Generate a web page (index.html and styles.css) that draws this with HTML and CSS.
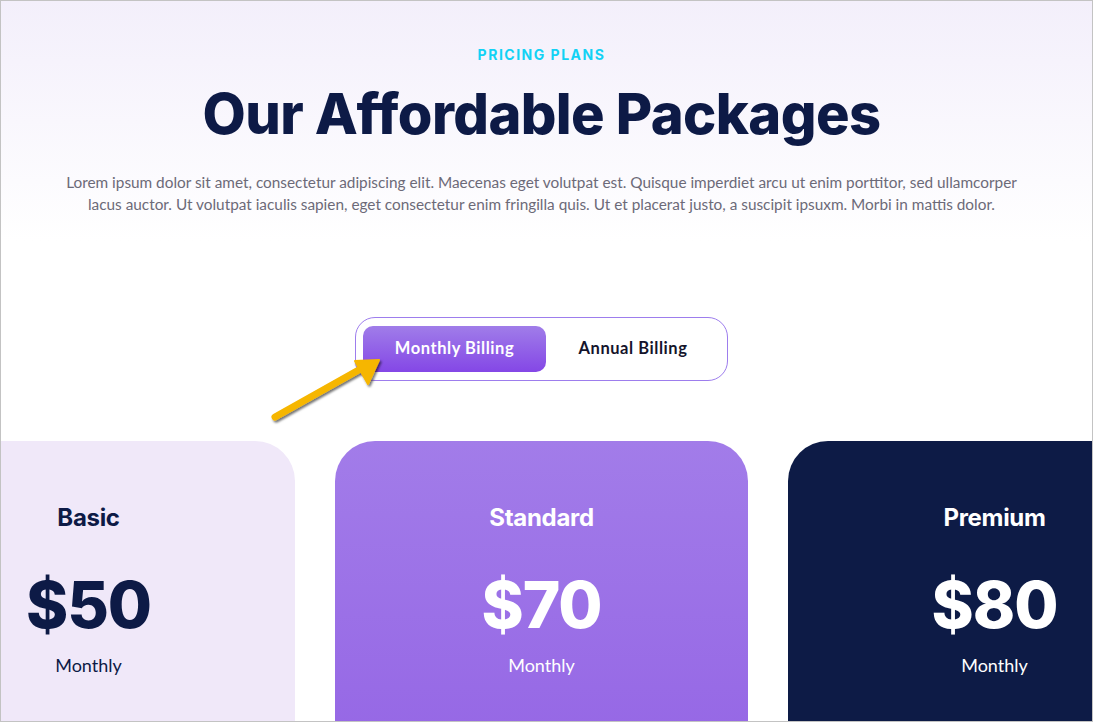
FILE: index.html
```html
<!DOCTYPE html>
<html lang="en">
<head>
<meta charset="utf-8">
<title>Pricing Plans</title>
<link rel="stylesheet" href="styles.css">
</head>
<body>
<div class="frame">
  <section class="hero">
    <p class="eyebrow">PRICING PLANS</p>
    <h1 class="title">Our Affordable Packages</h1>
    <p class="lead">Lorem ipsum dolor sit amet, consectetur adipiscing elit. Maecenas eget volutpat est. Quisque imperdiet arcu ut enim porttitor, sed ullamcorper lacus auctor. Ut volutpat iaculis sapien, eget consectetur enim fringilla quis. Ut et placerat justo, a suscipit ipsuxm. Morbi in mattis dolor.</p>
  </section>

  <div class="toggle-wrap">
    <div class="toggle">
      <button class="toggle-btn active">Monthly Billing</button>
      <button class="toggle-btn">Annual Billing</button>
    </div>
    <svg class="pointer" width="120" height="72" viewBox="0 0 120 72">
      <defs>
        <filter id="sh" x="-20%" y="-20%" width="140%" height="140%">
          <feDropShadow dx="1.5" dy="2" stdDeviation="1.2" flood-color="#000" flood-opacity="0.55"/>
        </filter>
      </defs>
      <g filter="url(#sh)">
        <line x1="6" y1="62" x2="95" y2="12" stroke="#f6b600" stroke-width="7" stroke-linecap="round"/>
        <polygon points="110,5 86,6 99,29" fill="#f6b600" stroke="#f6b600" stroke-width="2" stroke-linejoin="round"/>
      </g>
    </svg>
  </div>

  <div class="cards">
    <article class="card card-basic">
      <h2 class="card-name">Basic</h2>
      <p class="card-price">$50</p>
      <p class="card-period">Monthly</p>
    </article>
    <article class="card card-standard">
      <h2 class="card-name">Standard</h2>
      <p class="card-price">$70</p>
      <p class="card-period">Monthly</p>
    </article>
    <article class="card card-premium">
      <h2 class="card-name">Premium</h2>
      <p class="card-price">$80</p>
      <p class="card-period">Monthly</p>
    </article>
  </div>
</div>
</body>
</html>
```

FILE: styles.css
```css
* { box-sizing: border-box; }
html, body { margin: 0; padding: 0; background: #fff; }
body { font-family: "Nunito", "Lato", "Open Sans", sans-serif; }

.frame {
  width: 1093px;
  height: 722px;
  border: 1px solid #c3c3c3;
  overflow: hidden;
  background: #fff;
  padding-right: 10px;
  position: relative;
}

.hero {
  background: linear-gradient(180deg, #f3effb 0%, #ffffff 100%);
  margin-right: -10px;
  padding: 45px 10px 0 0;
  height: 240px;
  text-align: center;
}

.eyebrow {
  margin: 0;
  font-family: "Inter", sans-serif;
  font-weight: 700;
  font-size: 14px;
  letter-spacing: 1.5px;
  color: #12d2f5;
  line-height: 18px;
}

.title {
  margin: 15px 0 0;
  font-family: "Inter", sans-serif;
  font-weight: 800;
  font-size: 56px;
  letter-spacing: -0.6px;
  line-height: 70px;
  color: #0d1a46;
}

.lead {
  margin: 22px auto 0;
  width: 975px;
  font-family: "Lato", sans-serif;
  font-size: 15.35px;
  line-height: 22px;
  color: #6c6a78;
}

.toggle-wrap {
  margin-top: 76px;
  display: flex;
  justify-content: center;
  position: relative;
}

.toggle {
  display: flex;
  align-items: center;
  gap: 0;
  width: 373px;
  height: 64px;
  padding: 0 7px;
  border: 1px solid #9d7ded;
  border-radius: 20px;
  background: #fff;
}

.toggle-btn {
  border: 0;
  background: transparent;
  font-family: "Lato", sans-serif;
  font-weight: 700;
  font-size: 16.5px;
  letter-spacing: 0.55px;
  color: #14142b;
  height: 46px;
  border-radius: 10px;
  padding: 0 0 2px;
  cursor: pointer;
}
.toggle-btn.active {
  width: 183px;
  color: #fff;
  background: linear-gradient(180deg, #a07de9 0%, #8447e6 100%);
}
.toggle-btn:not(.active) { flex: 1; }

.pointer {
  position: absolute;
  left: 268px;
  top: 38px;
  overflow: visible;
}

.cards {
  margin-top: 60px;
  display: flex;
  justify-content: center;
  gap: 40px;
}

.card {
  flex: 0 0 413px;
  height: 320px;
  border-radius: 40px 40px 0 0;
  text-align: center;
  padding-top: 61px;
}
.card-basic { background: #f0e8f9; color: #0d1a46; }
.card-standard { background: linear-gradient(180deg, #a27ce9 0%, #9566e5 100%); color: #fff; }
.card-premium { background: #0d1b46; color: #fff; }

.card-name {
  margin: 0;
  font-family: "Inter", sans-serif;
  font-weight: 700;
  font-size: 24px;
  line-height: 32px;
  letter-spacing: -0.3px;
}
.card-price {
  margin: 33px 0 0;
  font-family: "Inter", sans-serif;
  font-weight: 800;
  font-size: 64px;
  line-height: 76px;
  letter-spacing: -1px;
}
.card-period {
  margin: 10px 0 0;
  font-family: "Lato", sans-serif;
  font-size: 18px;
  line-height: 24px;
}
```
